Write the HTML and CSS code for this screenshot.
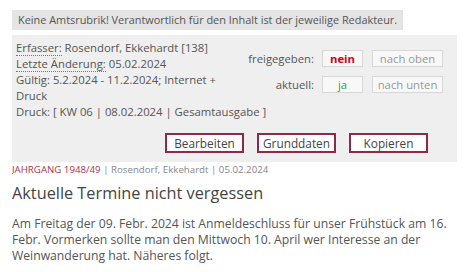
FILE: index.html
```html
<!DOCTYPE html>
<html lang="de">
<head>
  <meta charset="UTF-8">
  <title>Aktuelle Termine nicht vergessen</title>
  <link rel="stylesheet" href="styles.css">
</head>
<body>
  <div class="notice">Keine Amtsrubrik! Verantwortlich für den Inhalt ist der jeweilige Redakteur.</div>
  <div class="admin">
    <div class="admin-top">
      <div class="info">
        <div><abbr>Erfasser:</abbr> Rosendorf, Ekkehardt [138]</div>
        <div><abbr>Letzte Änderung:</abbr> 05.02.2024</div>
        <div>Gültig: 5.2.2024 - 11.2.2024; Internet + Druck</div>
      </div>
      <div class="status">
        <span class="label">freigegeben:</span>
        <span class="flag no">nein</span>
        <span class="move">nach oben</span>
        <span class="label">aktuell:</span>
        <span class="flag yes">ja</span>
        <span class="move">nach unten</span>
      </div>
    </div>
    <div>Druck: [ KW 06 | 08.02.2024 | Gesamtausgabe ]</div>
    <div class="actions">
      <span class="btn">Bearbeiten</span>
      <span class="btn">Grunddaten</span>
      <span class="btn">Kopieren</span>
    </div>
  </div>
  <div class="meta"><span class="volume">JAHRGANG 1948/49</span> | Rosendorf, Ekkehardt | 05.02.2024</div>
  <h1>Aktuelle Termine nicht vergessen</h1>
  <p>Am Freitag der 09. Febr. 2024 ist Anmeldeschluss für unser Frühstück am 16. Febr. Vormerken sollte man den Mittwoch 10. April wer Interesse an der Weinwanderung hat. Näheres folgt.</p>
</body>
</html>
```

FILE: styles.css
```css
body {
  margin: 10px 12px;
  font-family: 'Open Sans', 'DejaVu Sans', sans-serif;
  font-size: 11.3px;
  line-height: 16px;
  color: #555;
  background: #fff;
}
.notice {
  display: inline-block;
  background-color: #e4e4e4;
  padding: 2px 6px;
  font-size: 10.9px;
  color: #555;
}
.admin {
  margin-top: 5px;
  background-color: #efefef;
  padding: 5px 14px 9px 4px;
}
.admin-top {
  display: flex;
  justify-content: space-between;
  align-items: flex-start;
}
.info {
  width: 228px;
}
abbr {
  text-decoration: none;
  border-bottom: 1px dotted #777;
}
/* Freigabe-Status */
.status {
  margin-top: 10px;
  display: grid;
  grid-template-columns: auto 41px 71px;
  column-gap: 9px;
  row-gap: 9px;
  align-items: center;
}
.label {
  text-align: right;
  margin-right: -1px;
}
.flag, .move {
  border: 1px solid #d8d8d8;
  background: #f8f8f8;
  text-align: center;
  line-height: 15px;
}
.move {
  color: #999;
}
.no {
  color: #d0021b;
  font-weight: bold;
}
.yes {
  color: #3a9a3a;
}
.actions {
  display: flex;
  justify-content: flex-end;
  gap: 13px;
  margin-top: 13px;
  padding-right: 15px;
}
.btn {
  width: 75px;
  text-align: center;
  border: 2px solid #8e2a45;
  background: #fff;
  color: #444;
  font-size: 11.8px;
  line-height: 16px;
}
.meta {
  margin-top: 0;
  font-size: 9.7px;
  color: #888;
}
.volume {
  color: #a8334f;
}
h1 {
  margin: 4px 0 12px;
  font-size: 16.3px;
  font-weight: normal;
  line-height: 22px;
  color: #444;
}
p {
  margin: 0;
  font-size: 12.2px;
  line-height: 16px;
}
```
